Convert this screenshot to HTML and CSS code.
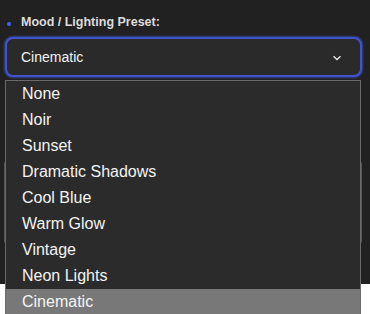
FILE: index.html
```html
<!DOCTYPE html>
<html>
<head>
<meta charset="utf-8">
<link rel="stylesheet" href="styles.css">
</head>
<body>
<div class="panel">
  <div class="label-row">
    <span class="dot"></span>
    <span class="label">Mood / Lighting Preset:</span>
  </div>
  <div class="select">
    <span class="value">Cinematic</span>
    <svg class="chev" width="10" height="6" viewBox="0 0 10 6"><path d="M1.5 1.2 L5 4.5 L8.5 1.2" fill="none" stroke="#e6e6e6" stroke-width="1.4"/></svg>
  </div>
  <div class="field"></div>
  <div class="dropdown">
    <div class="opt">None</div>
    <div class="opt">Noir</div>
    <div class="opt">Sunset</div>
    <div class="opt">Dramatic Shadows</div>
    <div class="opt">Cool Blue</div>
    <div class="opt">Warm Glow</div>
    <div class="opt">Vintage</div>
    <div class="opt">Neon Lights</div>
    <div class="opt active">Cinematic</div>
  </div>
</div>
</body>
</html>
```
FILE: styles.css
```css
html {
  overflow: hidden;
}
html, body {
  margin: 0;
  padding: 0;
  background: #ffffff;
}
body {
  font-family: "Liberation Sans", Arial, sans-serif;
  min-height: 314px;
}
.panel {
  position: relative;
  height: 284px;
  background: #212121;
  padding: 13px 8px 0 5px;
  box-sizing: border-box;
}
.label-row {
  display: flex;
  align-items: center;
  height: 18px;
}
.dot {
  width: 4px;
  height: 4px;
  border-radius: 50%;
  background: #4a5ff5;
  margin: 3px 0 0 2px;
}
.label {
  margin-left: 10px;
  font-size: 12.5px;
  font-weight: bold;
  color: #dcdcdc;
}
.select {
  margin-top: 6px;
  height: 40px;
  box-sizing: border-box;
  border: 2px solid #4054cc;
  border-radius: 8px;
  box-shadow: 0 0 0 1.5px rgba(55, 72, 170, 0.55);
  background: #2a2a2a;
  display: flex;
  align-items: center;
  justify-content: space-between;
  padding: 0 18px 0 14px;
}
.value {
  font-size: 14px;
  color: #f2f2f2;
}
.chev {
  display: block;
  margin-top: 1px;
}
.field {
  margin: 83px 0 0 -1px;
  height: 83px;
  border: 1px solid #555555;
  border-radius: 4px;
  background: #1e1e1e;
}
.dropdown {
  position: absolute;
  top: 80px;
  left: 5px;
  width: 356px;
  box-sizing: border-box;
  border: 1px solid #6a6a6a;
  background: #2b2b2b;
}
.opt {
  height: 26px;
  line-height: 26px;
  padding-left: 16px;
  font-size: 16px;
  color: #f4f4f4;
}
.opt.active {
  background: #787878;
}
```
